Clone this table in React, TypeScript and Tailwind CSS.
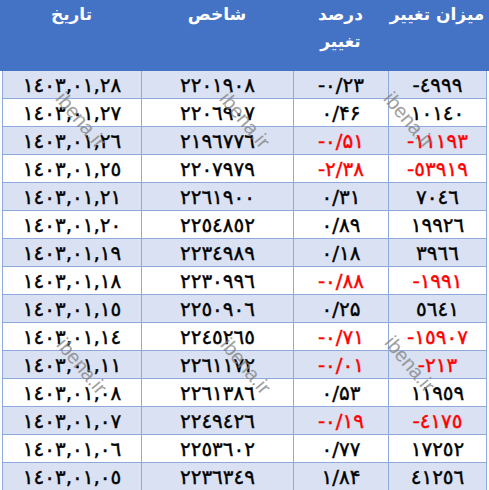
const rows: [string, string, string, string, boolean][] = [
  ["١٤٠٣,٠١,٢٨", "٢٢٠١٩٠٨", "-۰/۲۳", "-٤٩٩٩", false],
  ["١٤٠٣,٠١,٢٧", "٢٢٠٦٩٠٧", "۰/۴۶", "١٠١٤٠", false],
  ["١٤٠٣,٠١,٢٦", "٢١٩٦٧٧٦", "-۰/۵۱", "-١١١٩٣", true],
  ["١٤٠٣,٠١,٢٥", "٢٢٠٧٩٧٩", "-۲/۳۸", "-٥٣٩١٩", true],
  ["١٤٠٣,٠١,٢١", "٢٢٦١٩٠٠", "۰/۳۱", "٧٠٤٦", false],
  ["١٤٠٣,٠١,٢٠", "٢٢٥٤٨٥٢", "۰/۸۹", "١٩٩٢٦", false],
  ["١٤٠٣,٠١,١٩", "٢٢٣٤٩٨٩", "۰/۱۸", "٣٩٦٦", false],
  ["١٤٠٣,٠١,١٨", "٢٢٣٠٩٩٦", "-۰/۸۸", "-١٩٩١", true],
  ["١٤٠٣,٠١,١٥", "٢٢٥٠٩٠٦", "۰/۲۵", "٥٦٤١", false],
  ["١٤٠٣,٠١,١٤", "٢٢٤٥٢٦٥", "-۰/۷۱", "-١٥٩٠٧", true],
  ["١٤٠٣,٠١,١١", "٢٢٦١١٧٢", "-۰/۰۱", "-٢١٣", true],
  ["١٤٠٣,٠١,٠٨", "٢٢٦١٣٨٦", "۰/۵۳", "١١٩٥٩", false],
  ["١٤٠٣,٠١,٠٧", "٢٢٤٩٤٢٦", "-۰/۱۹", "-٤١٧٥", true],
  ["١٤٠٣,٠١,٠٦", "٢٢٥٣٦٠٢", "۰/۷۷", "١٧٢٥٢", false],
  ["١٤٠٣,٠١,٠٥", "٢٢٣٦٣٤٩", "۱/۸۴", "٤١٢٥٦", false],
];

// watermark centres
const marks = [
  [81, 120],
  [245, 120],
  [409, 120],
  [82, 366],
  [246, 366],
  [410, 364],
];

const cols = "grid grid-cols-[139px_152px_95px_98px]";

export default function App() {
  return (
    <div className="relative w-[489px] h-[490px] overflow-hidden bg-white font-['DejaVu_Sans',sans-serif]">
      <div className="h-[71px] bg-[#4472c4] text-white font-bold text-[17px] leading-[27px] px-[2px]">
        <div className={cols + " pt-[1px]"}>
          <div className="text-center">تاریخ</div>
          <div className="text-center">شاخص</div>
          <div className="text-center">
            درصد
            <br />
            تغییر
          </div>
          <div className="text-center">میزان تغییر</div>
        </div>
      </div>
      <div className="mx-[2px] border-l border-[#8ea9db]">
        {rows.map(([d, v, p, c, neg], i) => (
          <div
            key={d}
            dir="ltr"
            className={
              cols +
              " h-[28px] border-b border-[#8ea9db] text-[20px] leading-none [-webkit-text-stroke:0.4px] " +
              (i % 2 === 0 ? "bg-[#d9e1f2]" : "bg-white")
            }
          >
            <div className="flex items-center justify-center border-r border-[#8ea9db] text-black">{d}</div>
            <div className="flex items-center justify-center border-r border-[#8ea9db] text-black">{v}</div>
            <div className={"flex items-center justify-center border-r border-[#8ea9db] " + (neg ? "text-[#ff0000]" : "text-black")}>{p}</div>
            <div className={"flex items-center justify-center border-r border-[#8ea9db] " + (neg ? "text-[#ff0000]" : "text-black")}>{c}</div>
          </div>
        ))}
      </div>
      {marks.map(([x, y], i) => (
        <div
          key={i}
          className="absolute -translate-x-1/2 -translate-y-1/2 rotate-[50deg] font-['Liberation_Sans',sans-serif] text-[20px] leading-none text-[#808080] opacity-75 pointer-events-none"
          style={{ left: x, top: y }}
        >
          ibena.ir
        </div>
      ))}
    </div>
  );
}
